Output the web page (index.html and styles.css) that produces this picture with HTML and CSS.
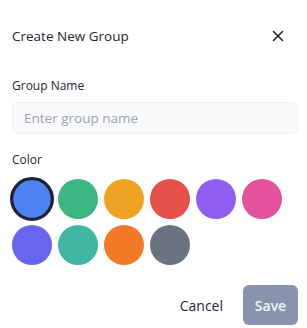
FILE: index.html
```html
<!DOCTYPE html>
<html lang="en">

<head>
    <meta charset="UTF-8">
    <meta name="viewport" content="width=device-width, initial-scale=1.0">
    <title>Create New Group</title>
    <link rel="stylesheet" href="styles.css">
</head>

<body>
    <div class="dialog">
        <header class="dialog-header">
            <h2 class="dialog-title">Create New Group</h2>
            <button class="close-btn" aria-label="Close">
                <svg width="12" height="12" viewBox="0 0 12 12">
                    <path d="M1.5 1.5 L10.5 10.5 M10.5 1.5 L1.5 10.5" stroke="#1f2433" stroke-width="1.6" stroke-linecap="round" fill="none"/>
                </svg>
            </button>
        </header>

        <label class="field-label" for="group-name">Group Name</label>
        <input class="text-input" id="group-name" type="text" placeholder="Enter group name">

        <div class="field-label color-label">Color</div>
        <div class="swatches">
            <button class="swatch selected" style="background:#4f82f2"></button>
            <button class="swatch" style="background:#3bb881"></button>
            <button class="swatch" style="background:#eea324"></button>
            <button class="swatch" style="background:#e5504b"></button>
            <button class="swatch" style="background:#8e5df2"></button>
            <button class="swatch" style="background:#e3529a"></button>
            <button class="swatch" style="background:#6a65ef"></button>
            <button class="swatch" style="background:#40b6a5"></button>
            <button class="swatch" style="background:#f27a26"></button>
            <button class="swatch" style="background:#6b7280"></button>
        </div>

        <footer class="dialog-footer">
            <button class="btn-cancel">Cancel</button>
            <button class="btn-save" disabled>Save</button>
        </footer>
    </div>
</body>

</html>
```

FILE: styles.css
```css
body {
    margin: 0;
    padding: 0;
    background: #fff;
    font-family: "Open Sans", sans-serif;
    color: #1f2433;
}

.dialog {
    padding: 26px 9px 0 12px;
}

/* Header */
.dialog-header {
    display: flex;
    align-items: center;
    justify-content: space-between;
    height: 20px;
    margin-bottom: 32px;
}

.dialog-title {
    margin: 0;
    font-size: 13.5px;
    font-weight: 400;
    line-height: 20px;
}

.close-btn {
    background: none;
    border: none;
    padding: 0;
    margin-right: 14px;
    width: 12px;
    height: 12px;
    display: flex;
    cursor: pointer;
}

/* Fields */
.field-label {
    display: block;
    font-size: 12px;
    line-height: 16px;
    margin-bottom: 8px;
}

.text-input {
    display: block;
    box-sizing: border-box;
    width: 100%;
    height: 32px;
    padding: 0 11px;
    border: 1px solid #eef0f2;
    border-radius: 6px;
    background: #f9fafb;
    font-family: inherit;
    font-size: 13.5px;
    color: #1f2433;
    outline: none;
}

.text-input::placeholder {
    color: #9ca3af;
}

.color-label {
    margin-top: 18px;
    margin-bottom: 9px;
}

/* Color swatches */
.swatches {
    display: flex;
    flex-wrap: wrap;
    gap: 6px;
    padding-top: 2px;
}

.swatch {
    width: 40px;
    height: 40px;
    border-radius: 50%;
    border: none;
    padding: 0;
    cursor: pointer;
}

.swatch.selected {
    box-sizing: border-box;
    border: 3px solid #1f2433;
    transform: scale(1.1);
}

/* Footer */
.dialog-footer {
    display: flex;
    justify-content: flex-end;
    align-items: center;
    gap: 12px;
    margin-top: 20px;
}

.btn-cancel {
    background: none;
    border: none;
    padding: 0 8px;
    height: 40px;
    font-family: inherit;
    font-size: 14px;
    color: #1f2433;
    cursor: pointer;
}

.btn-save {
    width: 55px;
    height: 40px;
    border: none;
    border-radius: 6px;
    background: #8893ae;
    color: #f3f5f8;
    font-family: inherit;
    font-size: 14px;
    font-weight: 600;
}
```
